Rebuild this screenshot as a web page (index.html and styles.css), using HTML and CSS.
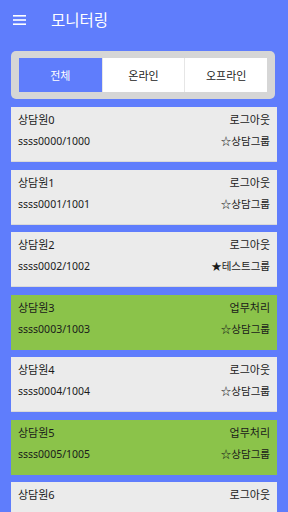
FILE: index.html
```html
<!DOCTYPE html>
<html lang="ko">
<head>
    <meta charset="UTF-8">
    <meta name="viewport" content="width=device-width, initial-scale=1.0">
    <title>모니터링</title>
    <link rel="stylesheet" href="styles.css">
</head>
<body>
    <div class="toolbar">
        <span class="menu-icon">
            <svg width="13" height="10" viewBox="0 0 13 10">
                <rect x="0" y="0" width="13" height="1.6" fill="#fff"/>
                <rect x="0" y="4.2" width="13" height="1.6" fill="#fff"/>
                <rect x="0" y="8.4" width="13" height="1.6" fill="#fff"/>
            </svg>
        </span>
        <span class="title">모니터링</span>
    </div>

    <div class="tab-box">
        <div class="tabs">
            <div class="tab active">전체</div>
            <div class="tab">온라인</div>
            <div class="tab">오프라인</div>
        </div>
    </div>

    <div class="list">
        <div class="agent">
            <div class="row"><span>상담원0</span><span>로그아웃</span></div>
            <div class="row sub"><span>ssss0000/1000</span><span>☆상담그룹</span></div>
        </div>
        <div class="agent">
            <div class="row"><span>상담원1</span><span>로그아웃</span></div>
            <div class="row sub"><span>ssss0001/1001</span><span>☆상담그룹</span></div>
        </div>
        <div class="agent">
            <div class="row"><span>상담원2</span><span>로그아웃</span></div>
            <div class="row sub"><span>ssss0002/1002</span><span>★테스트그룹</span></div>
        </div>
        <div class="agent busy">
            <div class="row"><span>상담원3</span><span>업무처리</span></div>
            <div class="row sub"><span>ssss0003/1003</span><span>☆상담그룹</span></div>
        </div>
        <div class="agent">
            <div class="row"><span>상담원4</span><span>로그아웃</span></div>
            <div class="row sub"><span>ssss0004/1004</span><span>☆상담그룹</span></div>
        </div>
        <div class="agent busy">
            <div class="row"><span>상담원5</span><span>업무처리</span></div>
            <div class="row sub"><span>ssss0005/1005</span><span>☆상담그룹</span></div>
        </div>
        <div class="agent">
            <div class="row"><span>상담원6</span><span>로그아웃</span></div>
        </div>
    </div>
</body>
</html>
```

FILE: styles.css
```css
html, body {
    margin: 0;
    padding: 0;
    height: 100%;
    overflow: hidden;
}
body {
    background: #5f7dfc;
    font-family: "Noto Sans", "Noto Sans CJK KR", sans-serif;
    color: #1a1a1a;
}
.toolbar {
    height: 40px;
    display: flex;
    align-items: center;
    padding-left: 13px;
}
.menu-icon {
    display: flex;
    width: 13px;
    height: 10px;
}
.title {
    margin-left: 25px;
    color: #fff;
    font-size: 15.5px;
    line-height: 20px;
}
.tab-box {
    margin: 11px 13px 0 11px;
    background: #d6d6d6;
    border-radius: 5px;
    padding: 7px 8px;
}
.tabs {
    display: grid;
    grid-template-columns: 1fr 1fr 1fr;
    height: 34px;
    background: #fff;
}
.tab {
    display: flex;
    align-items: center;
    justify-content: center;
    font-size: 11px;
    color: #222;
    border-left: 1px solid #e6e6e6;
}
.tab:first-child {
    border-left: none;
}
.tab.active {
    background: #5f7dfc;
    color: #fff;
}
.list {
    margin: 8px 11px 0 11px;
}
.agent {
    background: #ebebeb;
    border-bottom: 1px solid #d9d9d9;
    margin-bottom: 7.5px;
    padding: 5px 7px 0 7px;
    box-sizing: border-box;
    height: 55px;
}
.agent.busy {
    background: #8bc34a;
    border-bottom-color: #8bc34a;
}
.row {
    display: flex;
    justify-content: space-between;
    font-size: 11px;
    line-height: 16px;
}
.row.sub {
    margin-top: 5px;
    font-size: 10.5px;
}
```
